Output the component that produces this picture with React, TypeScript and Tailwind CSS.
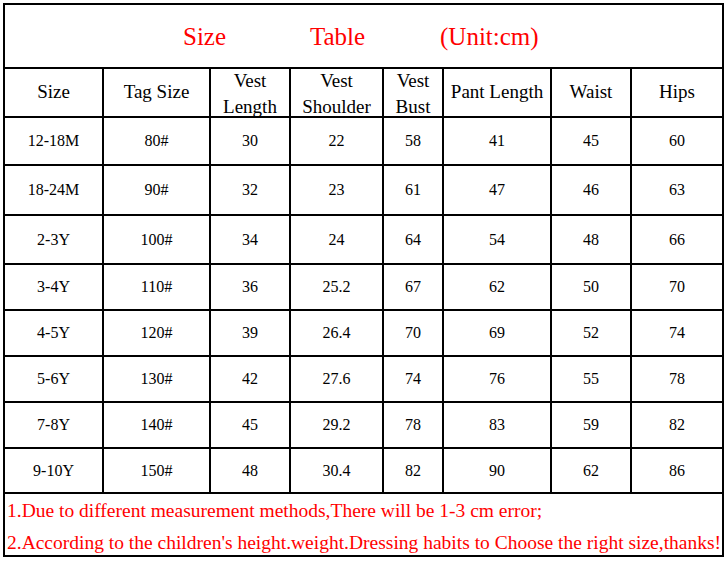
import React from 'react';

const headers: React.ReactNode[] = [
  'Size',
  'Tag Size',
  <span className="mt-[5px]">Vest<br />Length</span>,
  <span className="mt-[5px]">Vest<br />Shoulder</span>,
  <span className="mt-[5px]">Vest<br />Bust</span>,
  'Pant Length',
  'Waist',
  'Hips',
];

const rows = [
  ['12-18M', '80#', '30', '22', '58', '41', '45', '60'],
  ['18-24M', '90#', '32', '23', '61', '47', '46', '63'],
  ['2-3Y', '100#', '34', '24', '64', '54', '48', '66'],
  ['3-4Y', '110#', '36', '25.2', '67', '62', '50', '70'],
  ['4-5Y', '120#', '39', '26.4', '70', '69', '52', '74'],
  ['5-6Y', '130#', '42', '27.6', '74', '76', '55', '78'],
  ['7-8Y', '140#', '45', '29.2', '78', '83', '59', '82'],
  ['9-10Y', '150#', '48', '30.4', '82', '90', '62', '86'],
];

const App: React.FC = () => {
  return (
    <div className="h-[561px] w-[726px] bg-white pl-[3px] pt-[3px] font-['Liberation_Serif',serif]">
      <div className="grid w-[721px] grid-cols-[97px_105px_78px_91px_58px_106px_78px_90px] grid-rows-[62px_47px_46px_48px_47px_44px_44px_44px_44px_43px_61px] gap-[2px] bg-black p-[2px]">
        <div className="col-span-8 flex items-center bg-white pl-[178px] pt-[2px] text-[25px] text-[#f00]">
          <span className="w-[127px]">Size</span>
          <span className="w-[130px]">Table</span>
          <span>(Unit:cm)</span>
        </div>

        {headers.map((h, i) => (
          <div
            key={i}
            className="flex items-center justify-center overflow-hidden bg-white pb-[2px] text-center text-[19px] leading-[26px] text-black">
            {h}
          </div>
        ))}

        {rows.map((r) =>
          r.map((cell, j) => (
            <div key={r[0] + j} className="flex items-center justify-center bg-white text-[16px] text-black">
              {cell}
            </div>
          )),
        )}

        <div className="col-span-8 flex flex-col justify-center gap-[6px] whitespace-nowrap bg-white pl-[2px] pt-[4px] text-[19.5px] leading-[26px] text-[#f00]">
          <p>1.Due to different measurement methods,There will be 1-3 cm error;</p>
          <p>2.According to the children's height.weight.Dressing habits to Choose the right size,thanks!</p>
        </div>
      </div>
    </div>
  );
};

export default App;
